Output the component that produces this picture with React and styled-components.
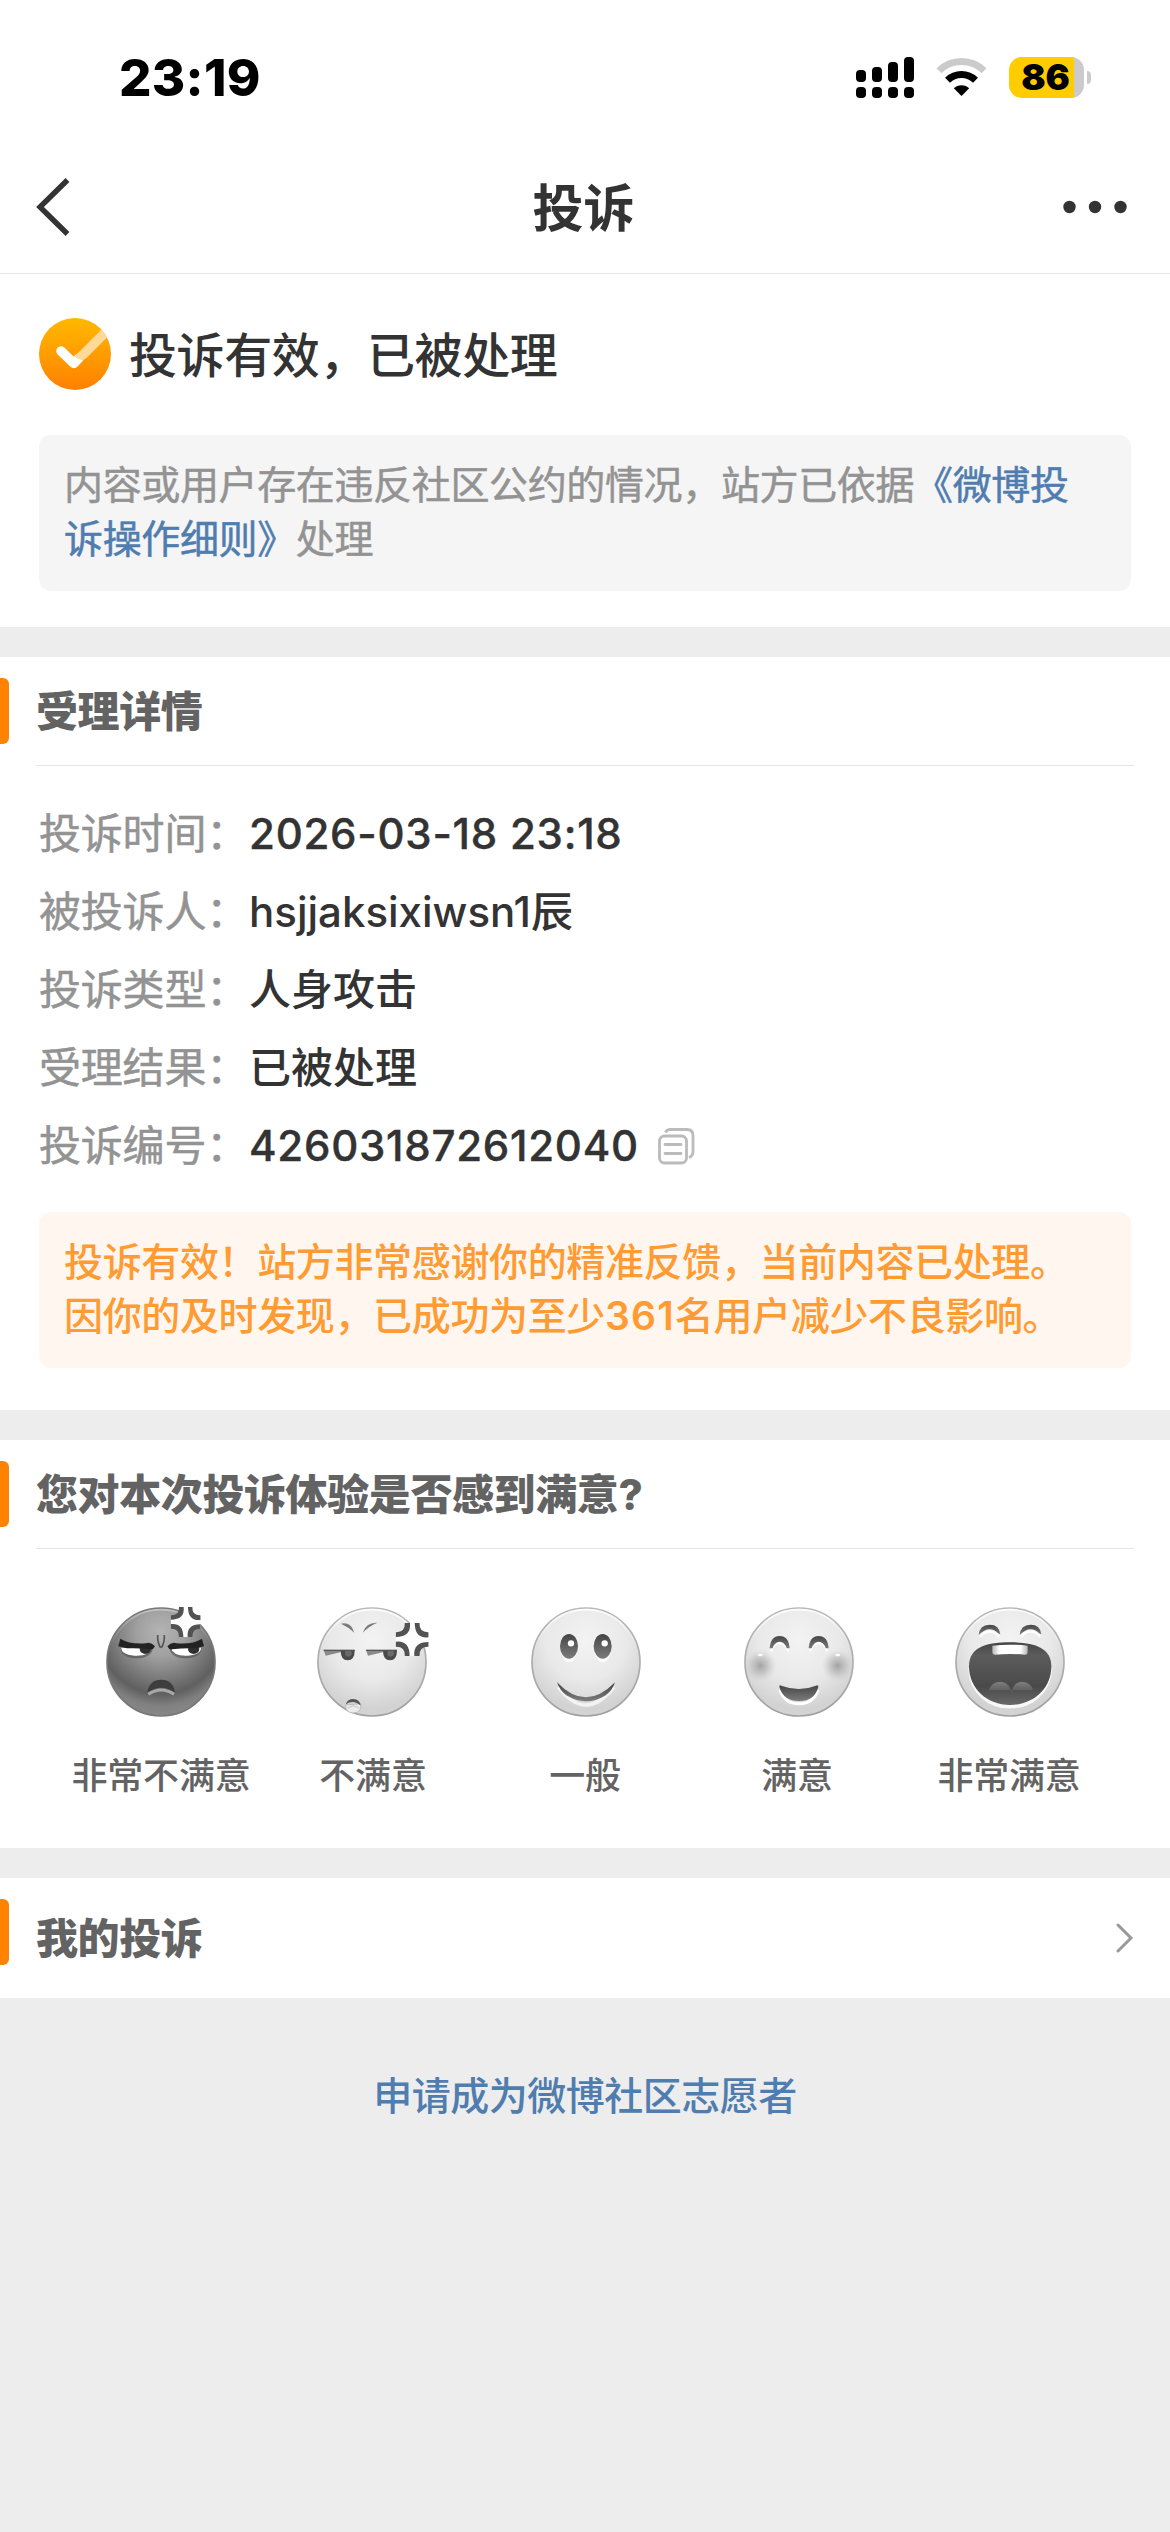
import React from "react";
import styled, { createGlobalStyle } from "styled-components";

const details = [
  { label: "投诉时间：", value: "2026-03-18 23:18", numeric: true },
  { label: "被投诉人：", value: "hsjjaksixiwsn1辰" },
  { label: "投诉类型：", value: "人身攻击" },
  { label: "受理结果：", value: "已被处理" },
  { label: "投诉编号：", value: "426031872612040", numeric: true, copy: true },
];

const App = () => {
  return (
    <Page>
      <GlobalStyle />
      <StatusBar>
        <Clock>23:19</Clock>
        <StatusIcons>
          <SignalIcon />
          <WifiIcon />
          <Battery>
            <BatteryBody>86</BatteryBody>
            <BatteryCap />
          </Battery>
        </StatusIcons>
      </StatusBar>
      <NavBar>
        <BackIcon />
        <NavTitle>投诉</NavTitle>
        <MoreIcon />
      </NavBar>

      <ResultSection>
        <ResultTitle>
          <CheckIcon />
          <ResultText>投诉有效，已被处理</ResultText>
        </ResultTitle>
        <Notice>
          内容或用户存在违反社区公约的情况，站方已依据
          <NoticeLink>《微博投诉操作细则》</NoticeLink>处理
        </Notice>
      </ResultSection>

      <Section>
        <SectionHeader>
          <SectionTitle>受理详情</SectionTitle>
        </SectionHeader>
        <DetailList>
          {details.map((item) => (
            <DetailRow key={item.label}>
              <DetailLabel>{item.label}</DetailLabel>
              <DetailValue $numeric={item.numeric}>{item.value}</DetailValue>
              {item.copy && <CopyIcon />}
            </DetailRow>
          ))}
        </DetailList>
        <Notice $warm>
          投诉有效！站方非常感谢你的精准反馈，当前内容已处理。
          <br />
          因你的及时发现，已成功为至少<Count>361</Count>名用户减少不良影响。
        </Notice>
      </Section>

      <Section>
        <SectionHeader>
          <SectionTitle>您对本次投诉体验是否感到满意?</SectionTitle>
        </SectionHeader>
        <Ratings>
          {ratings.map(({ label, Face, shift }) => (
            <Rating key={label}>
              <FaceBox $shift={shift}>
                <Face />
              </FaceBox>
              <RatingLabel>{label}</RatingLabel>
            </Rating>
          ))}
        </Ratings>
      </Section>

      <Section>
        <SectionHeader $link>
          <SectionTitle>我的投诉</SectionTitle>
          <ArrowIcon />
        </SectionHeader>
      </Section>

      <Apply href="#apply">申请成为微博社区志愿者</Apply>
    </Page>
  );
};

export default App;

// Icons
const SignalIcon = () => (
  <svg width="58" height="41" viewBox="0 0 58 41">
    <rect x="0" y="13" width="10" height="12" rx="4" />
    <rect x="16" y="10" width="10" height="15" rx="4" />
    <rect x="32" y="5" width="10" height="20" rx="4" />
    <rect x="48" y="0" width="10" height="25" rx="4" />
    {[0, 16, 32, 48].map((x) => (
      <rect key={x} x={x} y="30" width="10" height="11" rx="4" />
    ))}
  </svg>
);

const WifiIcon = () => (
  <svg width="51" height="41" viewBox="0 0 51 41" fill="none">
    <path d="M3 13.7 A32 32 0 0 1 48 13.7" stroke="#cbcbcb" strokeWidth="7" />
    <path d="M11.5 23.3 A20 20 0 0 1 39.5 23.3" stroke="#000" strokeWidth="7" />
    <path d="M25.5 39 L17.8 31.3 A11 11 0 0 1 33.2 31.3 Z" fill="#000" />
  </svg>
);

const BackIcon = () => (
  <svg width="36" height="58" viewBox="0 0 36 58" fill="none">
    <path d="M31.5 2 L4 29 L31.5 56" stroke="#333" strokeWidth="5.4" />
  </svg>
);

const MoreIcon = () => (
  <svg width="64" height="14" viewBox="0 0 64 14" fill="#333">
    <circle cx="6.5" cy="7" r="6.2" />
    <circle cx="32" cy="7" r="6.2" />
    <circle cx="57.5" cy="7" r="6.2" />
  </svg>
);

const CheckIcon = () => (
  <svg width="72" height="72" viewBox="0 0 72 72" fill="none">
    <defs>
      <linearGradient id="check" x1="0" y1="0" x2="0" y2="1">
        <stop offset="0" stopColor="#ffb900" />
        <stop offset="1" stopColor="#ff8000" />
      </linearGradient>
      <clipPath id="checkClip">
        <circle cx="36" cy="36" r="36" />
      </clipPath>
    </defs>
    <circle cx="36" cy="36" r="36" fill="url(#check)" />
    <g clipPath="url(#checkClip)" strokeWidth="9.6">
      <path
        d="M22 33 L34.8 45.4 L40 40"
        stroke="#fff"
        strokeLinecap="round"
        strokeLinejoin="round"
      />
      <path d="M35.5 38.6 L66 8 L73 14.5 L47 40.5 Q42 44 35.5 38.6 Z" fill="#ffd998" />
    </g>
  </svg>
);

const CopyIcon = () => (
  <svg width="37" height="37" viewBox="0 0 37 37" fill="none" stroke="#bbb" strokeWidth="2.8">
    <rect x="1.5" y="8" width="27" height="27" rx="5" />
    <path d="M7.5 4.5 Q9 1.5 12 1.5 H29 Q35 1.5 35 7.5 V23.5 Q35 28 31 29.5" />
    <path d="M7 16.5 H23 M7 25.5 H23" strokeLinecap="round" />
  </svg>
);

const ArrowIcon = () => (
  <svg width="18" height="30" viewBox="0 0 18 30" fill="none">
    <path d="M2 2 L15 15 L2 28" stroke="#999" strokeWidth="3" strokeLinecap="round" />
  </svg>
);

// Faces share a 330 unit canvas, three units per pixel
const FaceDefs = () => (
  <defs>
    <radialGradient id="skin" cx="0.5" cy="0.3" r="0.75">
      <stop offset="0" stopColor="#f3f3f3" />
      <stop offset="0.5" stopColor="#e9e9e9" />
      <stop offset="0.85" stopColor="#d2d2d2" />
      <stop offset="1" stopColor="#d6d6d6" />
    </radialGradient>
    <linearGradient id="ring" x1="0" y1="0" x2="0" y2="1">
      <stop offset="0" stopColor="#b9b9b9" />
      <stop offset="1" stopColor="#a0a0a0" />
    </linearGradient>
    <linearGradient id="ink" x1="0" y1="0" x2="0" y2="1">
      <stop offset="0" stopColor="#454545" />
      <stop offset="1" stopColor="#7c7c7c" />
    </linearGradient>
    <linearGradient id="shine" x1="0" y1="0" x2="0" y2="1">
      <stop offset="0" stopColor="#fff" />
      <stop offset="0.35" stopColor="#fff" stopOpacity="0" />
    </linearGradient>
  </defs>
);

const FaceBase = ({ children, fill = "url(#skin)", ring = "url(#ring)", shine = 0.9 }) => (
  <svg width="110" height="110" viewBox="0 0 330 330" overflow="visible">
    <FaceDefs />
    <circle cx="165" cy="165" r="162" fill={fill} stroke={ring} strokeWidth="5" />
    <circle
      cx="165"
      cy="165"
      r="157"
      fill="none"
      stroke="url(#shine)"
      strokeOpacity={shine}
      strokeWidth="5"
    />
    {children}
  </svg>
);

const AngerMark = ({ x, y, size }) => (
  <svg x={x} y={y} width={size} height={size} viewBox="0 0 90 90">
    <path
      d="M28 0 H62 Q62 28 90 28 V62 Q62 62 62 90 H28 Q28 62 0 62 V28 Q28 28 28 0 Z"
      fill="#fdfdfd"
    />
    {[0, 90, 180, 270].map((angle) => (
      <path
        key={angle}
        transform={`rotate(${angle} 45 45)`}
        d="M0 25 Q26 26 25 0 H39 Q43 38 0 38 Z"
        fill="#525252"
      />
    ))}
  </svg>
);

const AngryFace = () => (
  <FaceBase fill="url(#darkSkin)" ring="#777" shine={0.35}>
    <defs>
      <radialGradient id="darkSkin" cx="0.5" cy="0.22" r="0.76">
        <stop offset="0" stopColor="#b4b4b4" />
        <stop offset="0.3" stopColor="#a0a0a0" />
        <stop offset="0.76" stopColor="#606060" />
        <stop offset="0.9" stopColor="#808080" />
        <stop offset="1" stopColor="#868686" />
      </radialGradient>
    </defs>
    <g>
      <path d="M44 122 Q44 150 88 154 Q132 154 140 128 Z" fill="#4c4c4c" opacity="0.6" />
      <path d="M46 122 Q45 142 85 146 Q130 148 136 124 Z" fill="#fff" />
      <ellipse cx="118" cy="126" rx="17" ry="15" fill="#2f2f2f" />
      <path
        d="M43 95 Q72 113 120 109 Q134 103 147 118 Q140 131 132 127 Q95 122 62 124 L37 118 Z"
        fill="#222"
      />
    </g>
    <g transform="translate(331 0) scale(-1 1)">
      <path d="M44 122 Q44 150 88 154 Q132 154 140 128 Z" fill="#4c4c4c" opacity="0.6" />
      <path d="M46 122 Q45 142 85 146 Q130 148 136 124 Z" fill="#fff" />
      <ellipse cx="68" cy="126" rx="17" ry="15" fill="#2f2f2f" />
      <path
        d="M43 95 Q72 113 120 109 Q134 103 147 118 Q140 131 132 127 Q95 122 62 124 L37 118 Z"
        fill="#222"
      />
    </g>
    <path
      d="M155 84 Q154 108 164 122 M175 84 Q176 108 166 122"
      fill="none"
      stroke="#555"
      strokeWidth="5"
    />
    <path d="M124 256 Q130 218 166 218 Q201 218 207 256 Q166 228 124 256 Z" fill="#3d3d3d" />
    <path d="M127 262 Q166 236 204 262" fill="none" stroke="#a9a9a9" strokeWidth="9" />
    <AngerMark x="194" y="0" size="90" />
  </FaceBase>
);

const AnnoyedFace = () => (
  <FaceBase>
    <path d="M72 50 Q102 44 112 77 Q96 61 72 50 Z" fill="#7a7a7a" />
    <path d="M137 77 Q148 45 181 47 Q158 56 137 77 Z" fill="#7a7a7a" />
    {[0, 127].map((x) => (
      <g key={x} transform={`translate(${x} 0)`}>
        <path d="M20 129 H112 V136 H70 L26 146 Z" fill="#8a8a8a" />
        <path d="M71 130 H113 Q113 160 92 160 Q71 160 71 130 Z" fill="#4a4a4a" />
        <circle cx="94" cy="139" r="10" fill="#6a6a6a" />
        <path d="M20 130 H113" stroke="#555" strokeWidth="4" />
      </g>
    ))}
    <path d="M86 294 Q84 316 108 318 Q134 318 132 290 Z" fill="#ececec" stroke="#bcbcbc" strokeWidth="3" />
    <path d="M86 292 Q92 276 109 276 Q128 276 131 296 Q110 276 86 292 Z" fill="#555" />
    <path d="M92 304 Q109 290 126 304" fill="none" stroke="#cfcfcf" strokeWidth="4" />
    <AngerMark x="236" y="48" size="99" />
  </FaceBase>
);

const PlainFace = () => (
  <FaceBase>
    {[114, 215].map((x) => (
      <g key={x}>
        <ellipse cx={x} cy="128" rx="25" ry="37" fill="#fff" opacity="0.75" />
        <ellipse cx={x} cy="118" rx="27" ry="37" fill="url(#ink)" />
        <circle cx={x + 6} cy="109" r="9.5" fill="#fff" />
      </g>
    ))}
    <path
      d="M82 240 Q164 348 248 240"
      fill="none"
      stroke="#fff"
      strokeOpacity="0.7"
      strokeWidth="11"
    />
    <path d="M78 226 Q164 316 252 226 Q244 252 222 266 Q164 300 106 265 Q86 250 78 226 Z" fill="url(#ink)" />
  </FaceBase>
);

const Cheek = ({ x }) => (
  <>
    <circle cx={x} cy="176" r="48" fill="url(#cheek)" />
    <ellipse cx={x} cy="144" rx="7" ry="4" fill="#fff" />
  </>
);

const HappyFace = () => (
  <FaceBase>
    <defs>
      <radialGradient id="cheek">
        <stop offset="0" stopColor="#a2a2a2" />
        <stop offset="0.5" stopColor="#b4b4b4" stopOpacity="0.6" />
        <stop offset="1" stopColor="#c8c8c8" stopOpacity="0" />
      </radialGradient>
    </defs>
    <Cheek x={49} />
    <Cheek x={281} />
    {[0, 117].map((x) => (
      <g key={x} transform={`translate(${x} 0)`}>
        <path d="M82 134 Q86 108 107 108 Q129 108 132 134" fill="none" stroke="#fff" strokeWidth="7" />
        <path
          d="M77 124 Q80 87 107 87 Q134 87 137 124 L128 124 Q122 104 107 104 Q92 104 86 124 Z"
          fill="url(#ink)"
        />
      </g>
    ))}
    <path d="M108 248 Q122 290 165 290 Q208 290 222 248" fill="none" stroke="#fff" strokeWidth="9" />
    <path
      d="M106 240 Q105 233 112 236 Q165 256 216 236 Q224 233 223 240 Q212 282 165 282 Q118 282 106 240 Z"
      fill="url(#ink)"
    />
  </FaceBase>
);

const LaughingFace = () => (
  <FaceBase>
    <defs>
      <linearGradient id="mouth" x1="0" y1="0" x2="0" y2="1">
        <stop offset="0" stopColor="#444" />
        <stop offset="0.2" stopColor="#5c5c5c" />
        <stop offset="0.7" stopColor="#4a4a4a" />
        <stop offset="1" stopColor="#686868" />
      </linearGradient>
      <linearGradient id="teeth">
        <stop offset="0" stopColor="#b5b5b5" />
        <stop offset="0.2" stopColor="#fff" />
        <stop offset="0.8" stopColor="#fff" />
        <stop offset="1" stopColor="#b5b5b5" />
      </linearGradient>
      <linearGradient id="tongue" x1="0" y1="0" x2="0" y2="1">
        <stop offset="0" stopColor="#808080" />
        <stop offset="1" stopColor="#808080" stopOpacity="0" />
      </linearGradient>
    </defs>
    {[0, 123].map((x) => (
      <g key={x} transform={`translate(${x} 0)`}>
        <path d="M76 90 Q84 74 104 74 Q124 74 132 90" fill="none" stroke="#fff" strokeWidth="7" />
        <path
          d="M71 84 Q74 53 104 53 Q133 53 136 82 L129 79 Q118 67 104 67 Q88 67 71 84 Z"
          fill="url(#ink)"
        />
      </g>
    ))}
    <path
      d="M42 186 C46 258 100 302 165 302 C230 302 285 258 289 186 Z"
      fill="#f8f8f8"
      stroke="#f8f8f8"
      strokeWidth="5"
    />
    <path
      d="M42 178 C42 118 100 106 165 106 C230 106 289 118 289 178 C289 245 235 294 165 294 C96 294 42 245 42 178 Z"
      fill="url(#mouth)"
    />
    <path d="M102 250 Q108 224 138 224 Q168 228 169 264 Q172 228 198 224 Q228 224 234 250 Z" fill="url(#tongue)" />
    <path d="M112 116 Q165 110 218 116 V136 Q218 143 211 143 Q165 139 119 143 Q112 143 112 136 Z" fill="url(#teeth)" />
  </FaceBase>
);

const ratings = [
  { label: "非常不满意", Face: AngryFace, shift: 0 },
  { label: "不满意", Face: AnnoyedFace, shift: -1 },
  { label: "一般", Face: PlainFace, shift: 1 },
  { label: "满意", Face: HappyFace, shift: 2 },
  { label: "非常满意", Face: LaughingFace, shift: 1 },
];

// Styled Components
const GlobalStyle = createGlobalStyle`
  * {
    box-sizing: border-box;
  }

  body {
    margin: 0;
    background: #ededed;
  }

  a {
    text-decoration: none;
  }

  svg {
    display: block;
    flex-shrink: 0;
  }
`;

const Page = styled.div`
  width: 1170px;
  min-height: 2532px;
  background: #ededed;
  color: #333;
  font-family: Inter, "Noto Sans CJK SC", sans-serif;
`;

const StatusBar = styled.div`
  display: flex;
  justify-content: space-between;
  align-items: center;
  height: 141px;
  padding: 14px 79px 0 119px;
  background: #fff;
  color: #000;
`;

const Clock = styled.div`
  font-size: 51px;
  font-weight: 800;
  letter-spacing: 0.3px;
  line-height: 60px;
`;

const StatusIcons = styled.div`
  display: flex;
  align-items: center;
  gap: 22px;
`;

const Battery = styled.div`
  display: flex;
  align-items: center;
  gap: 3px;
`;

const BatteryBody = styled.div`
  width: 75px;
  height: 41px;
  padding-right: 2px;
  border-radius: 13px;
  background: linear-gradient(to right, #ffcc00 65px, #cbcbcb 65px);
  font-size: 36px;
  font-weight: 900;
  line-height: 41px;
  text-align: center;
`;

const BatteryCap = styled.div`
  width: 4px;
  height: 13px;
  border-radius: 0 4px 4px 0;
  background: #cbcbcb;
`;

const NavBar = styled.div`
  display: flex;
  justify-content: space-between;
  align-items: center;
  height: 133px;
  padding: 0 43px 0 36px;
  border-bottom: 1px solid #e6e6e6;
  background: #fff;
`;

const NavTitle = styled.h1`
  margin: 0 0 0 32px;
  padding-top: 4px;
  font-size: 51px;
  font-weight: 700;
  line-height: 60px;
`;

const ResultSection = styled.section`
  height: 353px;
  padding-top: 44px;
  background: #fff;
`;

const ResultTitle = styled.div`
  display: flex;
  align-items: center;
  height: 72px;
  margin: 0 39px 45px;
  gap: 18px;
`;

const ResultText = styled.div`
  padding-top: 3px;
  font-size: 48px;
  font-weight: 500;
  letter-spacing: -0.4px;
  line-height: 60px;
`;

const Notice = styled.div`
  height: 156px;
  margin: 0 39px;
  padding: 23px 25px;
  border-radius: 12px;
  background: ${(props) => (props.$warm ? "#fff6f0" : "#f5f5f5")};
  color: ${(props) => (props.$warm ? "#ff9b33" : "#939393")};
  font-size: 39px;
  font-weight: ${(props) => (props.$warm ? 500 : 400)};
  letter-spacing: -0.36px;
  line-height: 54px;
  -webkit-text-stroke: ${(props) => (props.$warm ? "0" : "0.5px")};
`;

const NoticeLink = styled.a`
  color: #507daf;
`;

const Count = styled.span`
  font-weight: 600;
  letter-spacing: 1.2px;
`;

const Section = styled.section`
  margin-top: 30px;
  background: #fff;

  ${ResultSection} + & {
    padding-bottom: 42px;
  }
`;

const SectionHeader = styled.div`
  display: flex;
  justify-content: space-between;
  align-items: center;
  height: ${(props) => (props.$link ? "120px" : "109px")};
  margin-right: 36px;

  /* orange marker on the page edge */
  &::before {
    content: "";
    align-self: flex-start;
    width: 9px;
    height: 66px;
    margin: 21px 27px 0 0;
    border-radius: 0 6px 6px 0;
    background: #ff8200;
  }

  & > h2 {
    border-bottom: ${(props) => (props.$link ? "none" : "1px solid #e6e6e6")};
  }
`;

const SectionTitle = styled.h2`
  display: flex;
  align-items: center;
  flex: 1;
  height: 100%;
  margin: 0;
  padding-top: 1px;
  color: #636363;
  font-size: 42px;
  font-weight: 800;
  letter-spacing: -0.4px;
  line-height: 60px;
`;

const DetailList = styled.div`
  padding: 29px 39px 27px;
`;

const DetailRow = styled.div`
  display: flex;
  align-items: center;
  height: 78px;
  font-size: 42px;
  line-height: 60px;
`;

const DetailLabel = styled.span`
  width: 210px;
  color: #939393;
  letter-spacing: -0.2px;
  -webkit-text-stroke: 0.5px;
`;

const DetailValue = styled.span`
  margin-right: 19px;
  font-weight: 500;
  letter-spacing: ${(props) => (props.$numeric ? "0.75px" : "0")};
  -webkit-text-stroke: ${(props) => (props.$numeric ? "0.4px" : "0")};
`;

const Ratings = styled.div`
  display: grid;
  grid-template-columns: repeat(5, 212px);
  justify-content: center;
  height: 299px;
  padding-top: 58px;
`;

const Rating = styled.div`
  display: flex;
  flex-direction: column;
  align-items: center;
  gap: 34px;
`;

const FaceBox = styled.div`
  transform: translateX(${(props) => props.$shift}px);
`;

const RatingLabel = styled.span`
  color: #636363;
  font-size: 36px;
  font-weight: 500;
  line-height: 50px;
  letter-spacing: -0.2px;
`;

const Apply = styled.a`
  display: block;
  margin-top: 69px;
  color: #507daf;
  font-size: 39px;
  font-weight: 500;
  letter-spacing: -0.5px;
  line-height: 58px;
  text-align: center;
`;
